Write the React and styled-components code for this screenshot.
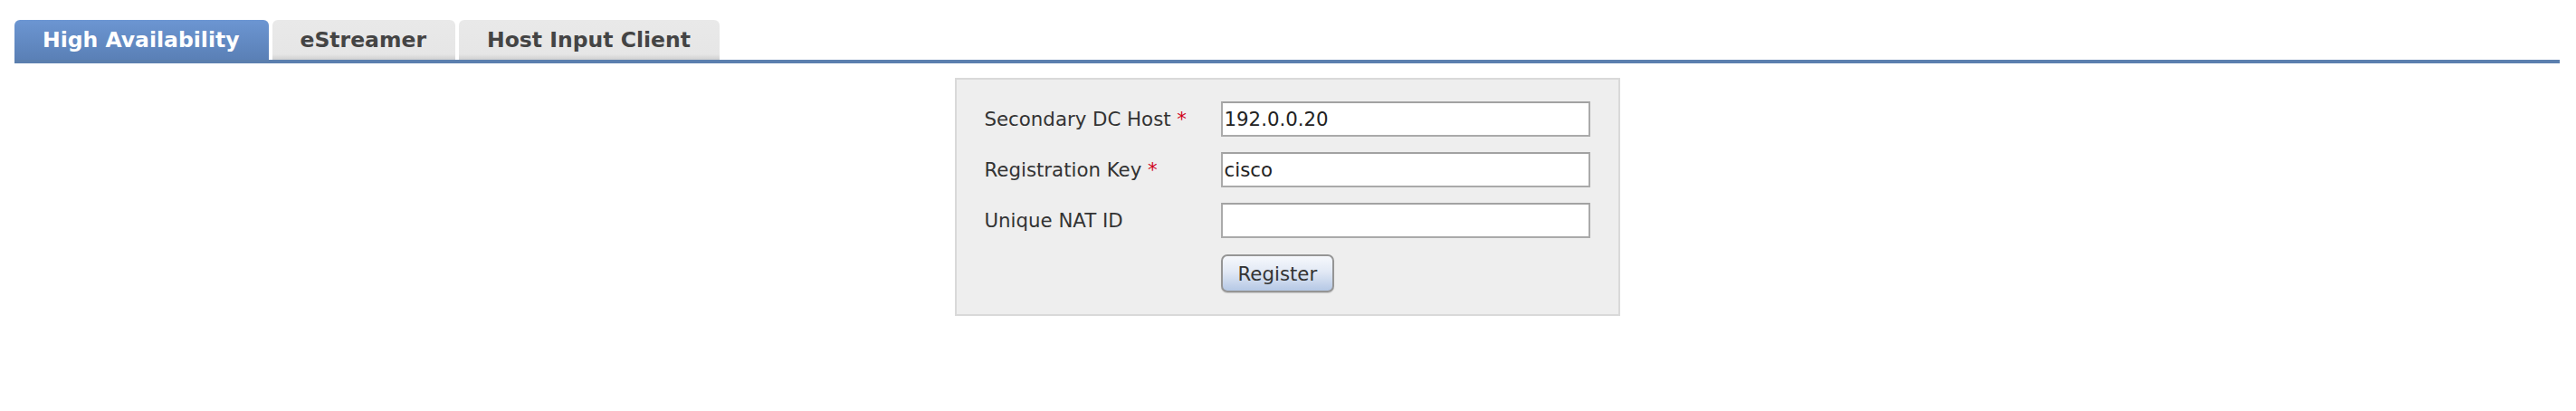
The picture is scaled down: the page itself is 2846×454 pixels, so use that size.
import React from 'react';
import styled, { createGlobalStyle } from 'styled-components';

const GlobalStyle = createGlobalStyle`
  body {
    margin: 0;
    background: #fff;
    font-family: "DejaVu Sans", Verdana, sans-serif;
  }
`;

const Page = styled.div`
  padding: 22px 18px 0 16px;
`;

const TabBar = styled.div`
  display: flex;
  align-items: flex-end;
  gap: 4px;
  border-bottom: 4px solid #5b7fae;
`;

const Tab = styled.div`
  height: 44px;
  padding: 0 32px 0 31px;
  line-height: 44px;
  font-size: 23.5px;
  font-weight: bold;
  white-space: nowrap;
  border-radius: 6px 6px 0 0;
  color: ${(p) => (p.active ? '#fff' : '#444')};
  background: ${(p) =>
    p.active
      ? 'linear-gradient(#6c96d2, #5a80b6)'
      : 'linear-gradient(#e9e9e9 0%, #e6e6e6 86%, #d0d0d0 100%)'};
`;

const Panel = styled.div`
  box-sizing: border-box;
  width: 735px;
  margin: 16px auto 0;
  padding: 24px 31px;
  border: 2px solid #d9d9d9;
  background: #eee;
  display: grid;
  grid-template-columns: 261px 408px;
  row-gap: 17px;
  align-items: center;
`;

const Label = styled.label`
  font-size: 21.3px;
  color: #333;
`;

const Required = styled.span`
  color: #d0021b;
`;

const Input = styled.input`
  box-sizing: border-box;
  height: 39px;
  width: 100%;
  margin: 0;
  padding: 0 2px;
  border: 2px solid #aaa;
  border-top-color: #a2a2a2;
  background: #fff;
  font-family: "DejaVu Sans", Verdana, sans-serif;
  font-size: 21.3px;
  color: #222;
  outline: none;
`;

const Button = styled.button`
  grid-column: 2;
  justify-self: start;
  box-sizing: border-box;
  height: 42px;
  margin-top: 1px;
  padding: 0 17px;
  border: 2px solid #959595;
  border-radius: 7px;
  background: linear-gradient(#f6f8fc 0%, #e2e9f5 45%, #b5c8e5 100%);
  box-shadow: 0 1px 1px rgba(0, 0, 0, 0.15);
  font-family: "DejaVu Sans", Verdana, sans-serif;
  font-size: 21.3px;
  color: #333;
`;

const tabs = [
  { label: 'High Availability', active: true },
  { label: 'eStreamer' },
  { label: 'Host Input Client' },
];

const fields = [
  { label: 'Secondary DC Host', value: '192.0.0.20', required: true },
  { label: 'Registration Key', value: 'cisco', required: true },
  { label: 'Unique NAT ID', value: '' },
];

const App = () => (
  <>
    <GlobalStyle />
    <Page>
      <TabBar>
        {tabs.map((t) => (
          <Tab key={t.label} active={t.active}>
            {t.label}
          </Tab>
        ))}
      </TabBar>
      <Panel>
        {fields.map((f) => (
          <React.Fragment key={f.label}>
            <Label>
              {f.label}
              {f.required && <Required> *</Required>}
            </Label>
            <Input defaultValue={f.value} />
          </React.Fragment>
        ))}
        <Button>Register</Button>
      </Panel>
    </Page>
  </>
);

export default App;
